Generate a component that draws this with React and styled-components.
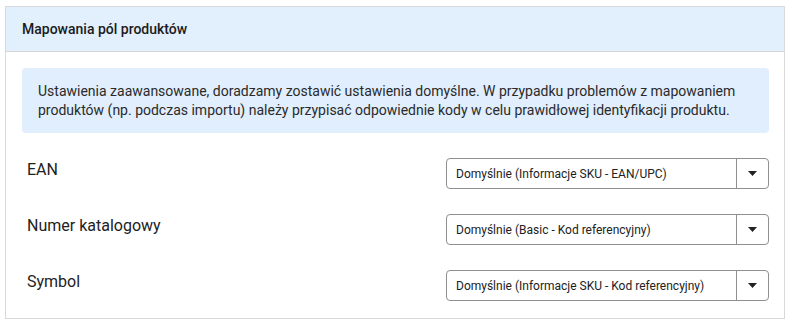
import React from 'react';
import styled, {createGlobalStyle} from 'styled-components';

const GlobalStyle = createGlobalStyle`
  body {
    margin: 0;
    background: #ffffff;
    font-family: Roboto, "Liberation Sans", Arial, sans-serif;
    color: #212121;
  }
`;

const Panel = styled.section`
  margin: 6px 6px 0 5px;
  border: 1px solid #d9d9d9;
  height: 313px;
  box-sizing: border-box;
`;

const PanelHeader = styled.header`
  background: #e2effd;
  border-bottom: 1px solid #d6d6d6;
  height: 45px;
  box-sizing: border-box;
  padding: 0 16px;
  display: flex;
  align-items: center;
  font-size: 14px;
  font-weight: 500;
  color: #1b1b1b;
`;

const PanelBody = styled.div`
  padding: 16px 15px 16px 16px;
  display: flex;
  flex-direction: column;
  gap: 25px;
`;

const InfoBox = styled.div`
  background: #e1eefd;
  border-radius: 4px;
  padding: 14px 16px 13px;
  font-size: 14px;
  line-height: 19px;
  color: #2a2a2a;
`;

const Row = styled.div`
  display: flex;
  align-items: flex-start;
  justify-content: space-between;
`;

const Label = styled.div`
  padding-left: 5px;
  font-size: 16px;
  line-height: 24px;
  color: #222222;
`;

const Select = styled.div`
  width: 323px;
  height: 31px;
  box-sizing: border-box;
  border: 1px solid #8f8f8f;
  border-radius: 4px;
  display: flex;
  align-items: stretch;
  background: #ffffff;
`;

const SelectValue = styled.div`
  flex: 1;
  display: flex;
  align-items: center;
  padding-left: 9px;
  font-size: 12px;
  color: #222222;
`;

const SelectButton = styled.div`
  width: 31px;
  border-left: 1px solid #8f8f8f;
  display: flex;
  align-items: center;
  justify-content: center;
`;

const Caret = () => (
  <svg width="9" height="5" viewBox="0 0 9 5">
    <path d="M0 0h9L4.5 5z" fill="#222" />
  </svg>
);

const fields = [
  {label: 'EAN', value: 'Domyślnie (Informacje SKU - EAN/UPC)'},
  {label: 'Numer katalogowy', value: 'Domyślnie (Basic - Kod referencyjny)'},
  {label: 'Symbol', value: 'Domyślnie (Informacje SKU - Kod referencyjny)'},
];

export default function App() {
  return (
    <>
      <GlobalStyle />
      <Panel>
        <PanelHeader>Mapowania pól produktów</PanelHeader>
        <PanelBody>
          <InfoBox>
            Ustawienia zaawansowane, doradzamy zostawić ustawienia domyślne. W
            przypadku problemów z mapowaniem produktów (np. podczas importu)
            należy przypisać odpowiednie kody w celu prawidłowej identyfikacji
            produktu.
          </InfoBox>
          {fields.map(field => (
            <Row key={field.label}>
              <Label>{field.label}</Label>
              <Select>
                <SelectValue>{field.value}</SelectValue>
                <SelectButton>
                  <Caret />
                </SelectButton>
              </Select>
            </Row>
          ))}
        </PanelBody>
      </Panel>
    </>
  );
}
